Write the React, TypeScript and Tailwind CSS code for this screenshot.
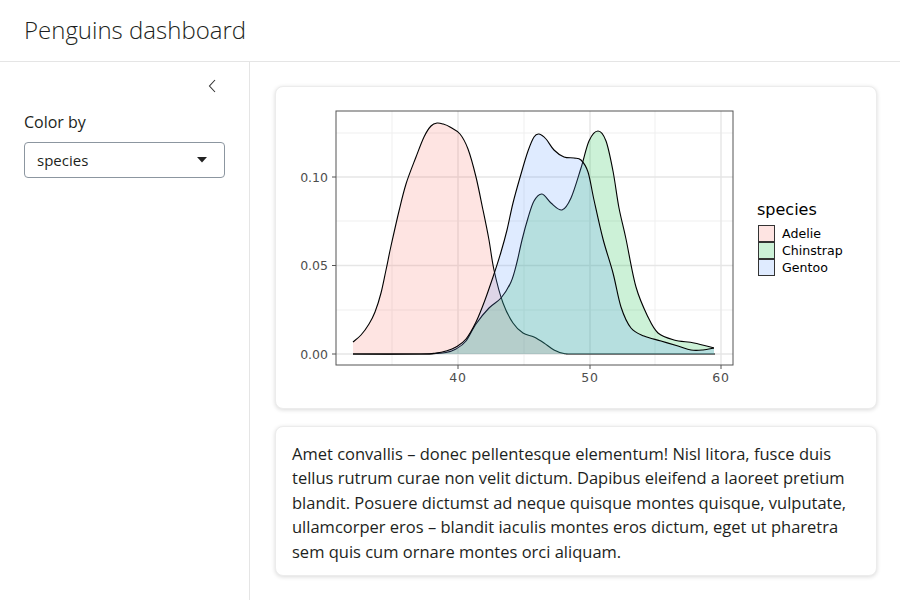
import React from "react"

type Pt = [number, number]

// page-pixel coordinates (svg viewBox is placed so they line up with the page)
const adelie: Pt[] = [
  [352, 342], [360, 335], [368, 324], [374, 312], [380, 293], [385, 270], [390, 246], [398, 211],
  [405, 184], [415, 157], [423, 137], [430, 126], [436, 123], [442, 124], [449, 127], [459, 134],
  [467, 149], [475, 177], [482, 210], [488, 240], [493, 270], [502, 303], [512, 323], [522, 333],
  [533, 337], [543, 343], [553, 350], [563, 353.5], [575, 354], [640, 354], [714, 354],
]

const chinstrap: Pt[] = [
  [352, 354], [420, 354], [435, 353.5], [445, 352.5], [455, 349], [465, 341], [475, 324], [488, 308],
  [500, 298], [510, 282], [516, 262], [521, 240], [527, 218], [533, 201], [541, 194], [550, 203],
  [561, 210], [570, 198], [580, 168], [588, 141], [597, 131], [605, 141], [612, 171], [618, 208],
  [625, 239], [635, 287], [647, 317], [657, 333], [673, 340], [693, 343], [713, 348],
]

const gentoo: Pt[] = [
  [352, 354], [420, 354], [435, 353], [445, 351], [455, 347], [465, 339], [475, 322], [484, 300],
  [492, 277], [500, 252], [506, 230], [512, 203], [520, 174], [527, 151], [533, 137], [538, 134],
  [545, 139], [553, 150], [563, 157], [573, 158], [580, 160], [587, 172], [593, 200], [602, 239],
  [612, 273], [620, 307], [630, 328], [643, 336], [660, 341], [677, 346], [690, 350], [702, 350],
  [713, 348],
]

function smooth(pts: Pt[]) {
  let d = `M${pts[0][0]},${pts[0][1]}`
  for (let i = 0; i < pts.length - 1; i++) {
    const p0 = pts[i - 1] || pts[i]
    const p1 = pts[i]
    const p2 = pts[i + 1]
    const p3 = pts[i + 2] || p2
    const c1x = p1[0] + (p2[0] - p0[0]) / 6
    const c1y = p1[1] + (p2[1] - p0[1]) / 6
    const c2x = p2[0] - (p3[0] - p1[0]) / 6
    const c2y = p2[1] - (p3[1] - p1[1]) / 6
    d += ` C${c1x.toFixed(1)},${c1y.toFixed(1)} ${c2x.toFixed(1)},${c2y.toFixed(1)} ${p2[0]},${p2[1]}`
  }
  return d
}

function Density({ pts, color }: { pts: Pt[]; color: string }) {
  const line = smooth(pts)
  const last = pts[pts.length - 1]
  const area = `${line} L${last[0]},354 L${pts[0][0]},354 Z`
  return (
    <g>
      <path d={area} fill={color} fillOpacity={0.2} stroke="none" />
      <path d={line} fill="none" stroke="#000" strokeWidth={1.1} />
    </g>
  )
}

function DensityPlot() {
  const xMajor = [457, 589, 720]
  const xMinor = [391, 523, 654]
  const yMajor = [354, 265.5, 177]
  const yMinor = [310, 221, 133]
  const legend = [
    { label: "Adelie", color: "#F8766D" },
    { label: "Chinstrap", color: "#00BA38" },
    { label: "Gentoo", color: "#619CFF" },
  ]
  return (
    <svg viewBox="291 103 568 289" width={568} height={289} className="block" style={{ fontFamily: "'DejaVu Sans', sans-serif" }}>
      <rect x={335} y={111} width={397} height={254} fill="#fff" />
      {yMinor.map((y) => (
        <line key={"ym" + y} x1={335} x2={732} y1={y} y2={y} stroke="#EFEFEF" strokeWidth={1} />
      ))}
      {xMinor.map((x) => (
        <line key={"xm" + x} x1={x} x2={x} y1={111} y2={365} stroke="#EFEFEF" strokeWidth={1} />
      ))}
      {yMajor.map((y) => (
        <line key={"yM" + y} x1={335} x2={732} y1={y} y2={y} stroke="#E6E6E6" strokeWidth={1.4} />
      ))}
      {xMajor.map((x) => (
        <line key={"xM" + x} x1={x} x2={x} y1={111} y2={365} stroke="#E6E6E6" strokeWidth={1.4} />
      ))}
      <Density pts={adelie} color="#F8766D" />
      <Density pts={chinstrap} color="#00BA38" />
      <Density pts={gentoo} color="#619CFF" />
      <rect x={335} y={111} width={397} height={254} fill="none" stroke="#555" strokeWidth={1} />
      {yMajor.map((y, i) => (
        <g key={"yt" + y}>
          <line x1={331} x2={335} y1={y} y2={y} stroke="#555" strokeWidth={1} />
          <text x={327} y={y + 4.5} textAnchor="end" fontSize={12.5} fill="#4D4D4D">
            {["0.00", "0.05", "0.10"][i]}
          </text>
        </g>
      ))}
      {xMajor.map((x, i) => (
        <g key={"xt" + x}>
          <line x1={x} x2={x} y1={365} y2={369} stroke="#555" strokeWidth={1} />
          <text x={x} y={382} textAnchor="middle" fontSize={12.5} fill="#4D4D4D" letterSpacing={0.8}>
            {["40", "50", "60"][i]}
          </text>
        </g>
      ))}
      <text x={756} y={215} fontSize={16} fill="#000">
        species
      </text>
      {legend.map((l, i) => (
        <g key={l.label}>
          <rect x={757.5} y={225.5 + i * 17} width={16} height={16} fill="#fff" />
          <rect x={757.5} y={225.5 + i * 17} width={16} height={16} fill={l.color} fillOpacity={0.2} stroke="#333" strokeWidth={1} />
          <text x={781} y={238 + i * 17} fontSize={12.6} fill="#000">
            {l.label}
          </text>
        </g>
      ))}
    </svg>
  )
}

export default function App() {
  return (
    <div className="h-screen flex flex-col bg-white text-[#1d1f21]" style={{ fontFamily: "'Open Sans', 'Noto Sans', sans-serif" }}>
      <header className="h-[62px] shrink-0 border-b border-[#e5e5e5] flex items-center px-6 pb-[2px]">
        <h1 className="text-[24px] font-light text-[#1d1f21] leading-none">Penguins dashboard</h1>
      </header>
      <div className="flex flex-1 min-h-0">
        <aside className="w-[250px] shrink-0 border-r border-[#e5e5e5] px-6 pt-[16px]">
          <div className="flex justify-end pr-[4px] h-[16px]">
            <svg width="16" height="16" viewBox="0 0 16 16">
              <polyline points="10,2 4.5,8 10,14" fill="none" stroke="#333" strokeWidth="1.1" />
            </svg>
          </div>
          <label className="block mt-[16px] text-[16px] leading-6">Color by</label>
          <div className="mt-[8px] h-[36px] border border-[#8c96a0] rounded-[4px] flex items-center justify-between pl-3 pr-[17px]">
            <span className="text-[15px]">species</span>
            <svg width="10" height="6" viewBox="0 0 10 6">
              <polygon points="0,0 10,0 5,5.5" fill="#222" />
            </svg>
          </div>
        </aside>
        <main className="flex-1 px-[25px] pt-[24px] flex flex-col gap-[17px]">
          <section className="rounded-[8px] border border-[#ececec] bg-white shadow-[0_1px_4px_rgba(0,0,0,0.15)] p-4">
            <DensityPlot />
          </section>
          <section className="rounded-[8px] border border-[#ececec] bg-white shadow-[0_1px_4px_rgba(0,0,0,0.15)] px-4 pt-[15px] pb-[11px]">
            <p className="text-[16.5px] leading-[24.4px]">
              Amet convallis – donec pellentesque elementum! Nisl litora, fusce duis tellus rutrum curae non velit dictum. Dapibus eleifend a laoreet pretium blandit. Posuere dictumst ad neque quisque montes quisque, vulputate, ullamcorper eros – blandit iaculis montes eros dictum, eget ut pharetra sem quis cum ornare montes orci aliquam.
            </p>
          </section>
        </main>
      </div>
    </div>
  )
}
